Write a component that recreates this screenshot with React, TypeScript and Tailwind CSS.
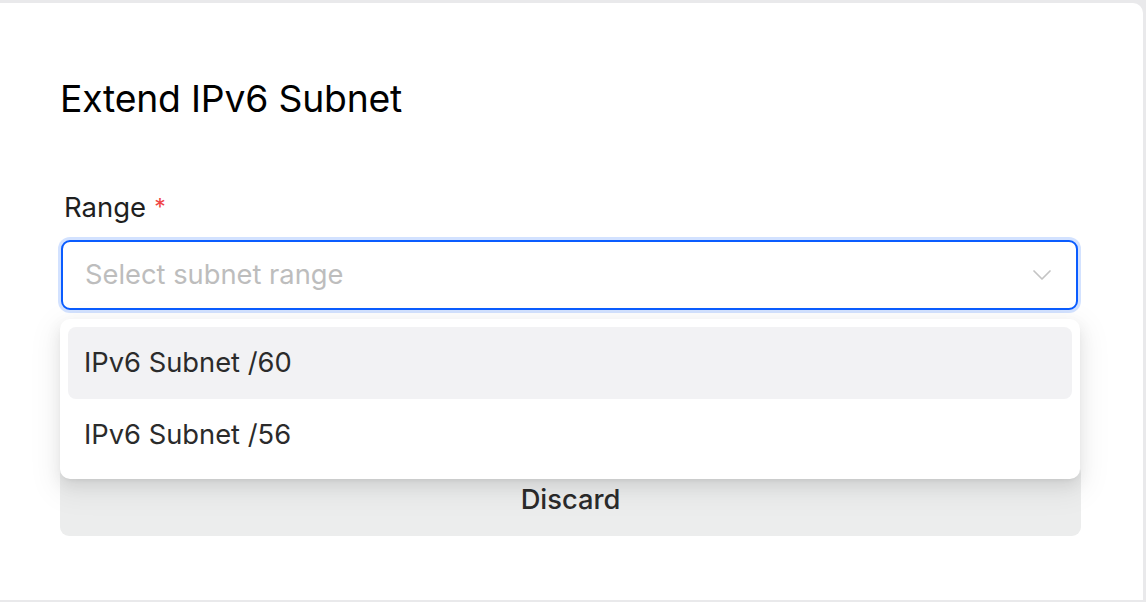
import { ChevronDown } from 'lucide-react';

const options = ['IPv6 Subnet /60', 'IPv6 Subnet /56'];

export default function App() {
  return (
    <div
      className="h-[602px] w-[1146px] overflow-hidden bg-[#e9e9eb] pt-[3px] pr-[3px] pb-[2px]"
      style={{ fontFamily: 'Inter, "Noto Sans", sans-serif' }}
    >
      <div className="flex h-full flex-col rounded-tr-[10px] bg-white pt-[74px] pr-[65px] pl-[61px]">
        <h1 className="-ml-px text-[37.3px] leading-[44px] font-normal tracking-[-0.2px] text-black">
          Extend IPv6 Subnet
        </h1>

        <div className="mt-[69px]">
          <label className="flex items-center gap-[8px] pl-[3px] text-[27.5px] leading-[34px] text-[#1f1f1f]">
            Range <span className="text-[23px] text-[#ef4444]">*</span>
          </label>

          <div className="relative mt-[16px]">
            <div className="flex h-[70px] items-center justify-between rounded-[9px] border-2 border-[#0a5cff] bg-white pr-[18px] pl-[22px] shadow-[0_0_0_3px_rgba(10,92,255,0.18)]">
              <span className="text-[27.3px] text-[#bdbdbd]">Select subnet range</span>
              <ChevronDown className="h-[32px] w-[32px] text-[#c4c4c4]" strokeWidth={1.3} />
            </div>

            <div className="mt-[154px]">
              <button className="-ml-px flex h-[72px] w-[calc(100%+4px)] items-center justify-center rounded-[9px] bg-[#eceded] text-[27.3px] font-medium text-[#2b2b2b]">
                Discard
              </button>
            </div>

            {/* open dropdown */}
            <div className="absolute top-[79px] -right-[2px] -left-px rounded-[10px] bg-white p-[8px] shadow-[0_6px_16px_0_rgba(0,0,0,0.08),0_3px_6px_-4px_rgba(0,0,0,0.12),0_9px_28px_8px_rgba(0,0,0,0.05)]">
              {options.map((opt, i) => (
                <div
                  key={opt}
                  className={`flex h-[72px] items-center rounded-[8px] px-[16px] text-[27.3px] text-[#2b2b2b] ${
                    i === 0 ? 'bg-[#f2f2f4]' : ''
                  }`}
                >
                  {opt}
                </div>
              ))}
            </div>
          </div>
        </div>
      </div>
    </div>
  );
}
